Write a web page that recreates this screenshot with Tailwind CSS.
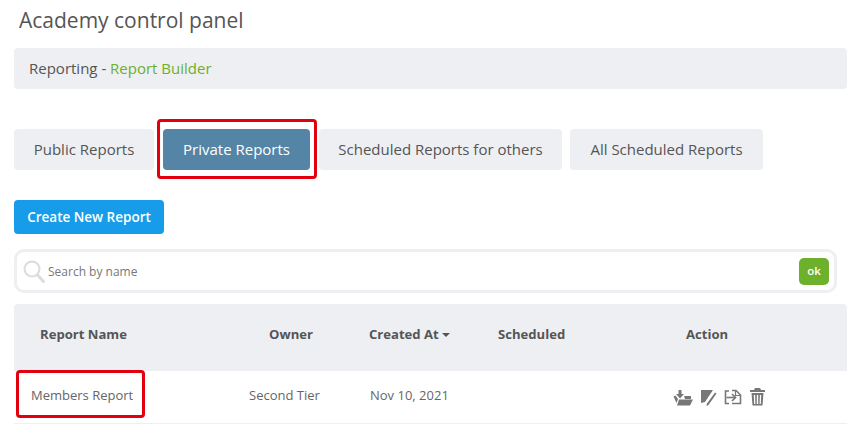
<!DOCTYPE html>
<html lang="en">
  <head>
    <meta charset="UTF-8" />
    <title>Academy control panel</title>
    <script src="https://cdn.jsdelivr.net/npm/@tailwindcss/browser@4"></script>
  </head>
  <body class="bg-white font-['Open_Sans',sans-serif] text-[#555] overflow-hidden">
    <div class="h-[433px] w-[855px] overflow-hidden pl-[14px] pr-2">
      <h1 class="pl-[5px] pt-[7px] text-[21px] leading-[27px] text-[#555]">Academy control panel</h1>

      <div class="mt-[14px] h-[41px] rounded bg-[#eeeff3] pl-[15px] text-[15px] leading-[41px]">
        Reporting - <span class="text-[#6cb02c]">Report Builder</span>
      </div>

      <div class="relative mt-10 flex h-[41px] text-[15px] leading-[41px]">
        <a class="w-[140px] rounded bg-[#eeeff3] text-center">Public Reports</a>
        <a class="ml-[9px] w-[147px] rounded bg-[#5485a6] text-center font-medium text-white">Private Reports</a>
        <a class="ml-[9px] w-[243px] rounded bg-[#eeeff3] text-center">Scheduled Reports for others</a>
        <a class="ml-2 w-[193px] rounded bg-[#eeeff3] text-center">All Scheduled Reports</a>
        <div class="absolute left-[143px] top-[-10px] h-[60px] w-[160px] rounded-sm border-[3px] border-[#e2000f]"></div>
      </div>

      <button class="mt-[30px] block h-[34px] w-[150px] rounded bg-[#169ce8] text-[13.500px] font-semibold text-white">Create New Report</button>

      <div class="mt-[15px] flex h-[44px] w-[823px] items-center rounded-[10px] border-[3px] border-[#eeeff3] pl-[5px] pr-[5px]">
        <svg class="h-[26px] w-[24px] shrink-0" viewBox="0 0 24 26" fill="none" stroke="#dcdcdc">
          <circle cx="10" cy="11" r="7.500" stroke-width="2" />
          <path d="M15.500 17l6 6.500" stroke-width="3" stroke-linecap="round" />
        </svg>
        <span class="ml-[2px] pt-px text-xs text-[#777]">Search by name</span>
        <button class="ml-auto h-[27px] w-[30px] rounded-[5px] bg-[#6cb02c] text-[11.500px] font-semibold text-white">ok</button>
      </div>

      <div class="mt-[11px] w-[833px]">
        <div class="grid h-[67px] grid-cols-[216px_120px_116px_130px_1fr] items-center rounded-t bg-[#eeeff3] pb-[6px] text-[13.100px] font-bold">
          <div class="pl-[26px]">Report Name</div>
          <div class="pl-[39px]">Owner</div>
          <div class="flex items-center pl-[19px]">
            Created At
            <span class="ml-[3px] mt-px border-x-[4px] border-t-[4px] border-x-transparent border-t-[#555]"></span>
          </div>
          <div class="pl-[32px]">Scheduled</div>
          <div class="pl-[90px]">Action</div>
        </div>

        <div class="relative grid h-[53px] grid-cols-[216px_120px_116px_130px_1fr] items-center border-b border-[#eeeff3] pb-[2px] text-[13px] text-[#666]">
          <div class="pl-[17px]">Members Report</div>
          <div class="pl-[19px]">Second Tier</div>
          <div class="pl-[20px]">Nov 10, 2021</div>
          <div></div>
          <div class="flex items-center pl-[77px] pt-px">
            <svg class="h-[18px] w-[20px]" viewBox="0 0 20 18" fill="#777">
              <path d="M5.500 2h3v4h2.500L7 10.500 3 6h2.500z" />
              <path d="M11 8h7v3h-6zM0.500 8.500l2-1 2.500 3.500-1.500 4z" />
              <path d="M6 11.500h14L17 17.500H4z" />
            </svg>
            <svg class="ml-[7px] h-[18px] w-[18px]" viewBox="0 0 18 18" fill="#777">
              <path d="M1 2h12L5 14l-4 1z" />
              <path d="M15 4.500l1.500 1L8.500 17l-2 1 .3-2.200z" />
            </svg>
            <svg class="ml-[6px] h-[18px] w-[18px]" viewBox="0 0 18 18" fill="none" stroke="#777" stroke-width="1.600">
              <path d="M5 3H1.500v12.500H5" />
              <path d="M8 2.500h4l4.500 4.500v8.500H8" />
              <path d="M11.500 2.500v5h5" stroke-width="1.200" />
              <path d="M2.500 9.500h9" />
              <path d="M8 6l3.500 3.500L8 13" />
            </svg>
            <svg class="ml-2 h-[18px] w-[15px]" viewBox="0 0 15 18" fill="#777">
              <path d="M5 0h5l1 2h4v2H0V2h4z" />
              <path fill-rule="evenodd" d="M1.500 5h12l-1 12.500h-10zM3.800 7l.4 9h1.200L5.100 7zm3 0v9h1.400V7zm3.100 0l-.3 9h1.200l.4-9z" />
            </svg>
          </div>
          <div class="absolute left-[2px] top-[-1px] h-[48px] w-[129px] rounded-sm border-[3px] border-[#e2000f]"></div>
        </div>
      </div>
    </div>
  </body>
</html>
